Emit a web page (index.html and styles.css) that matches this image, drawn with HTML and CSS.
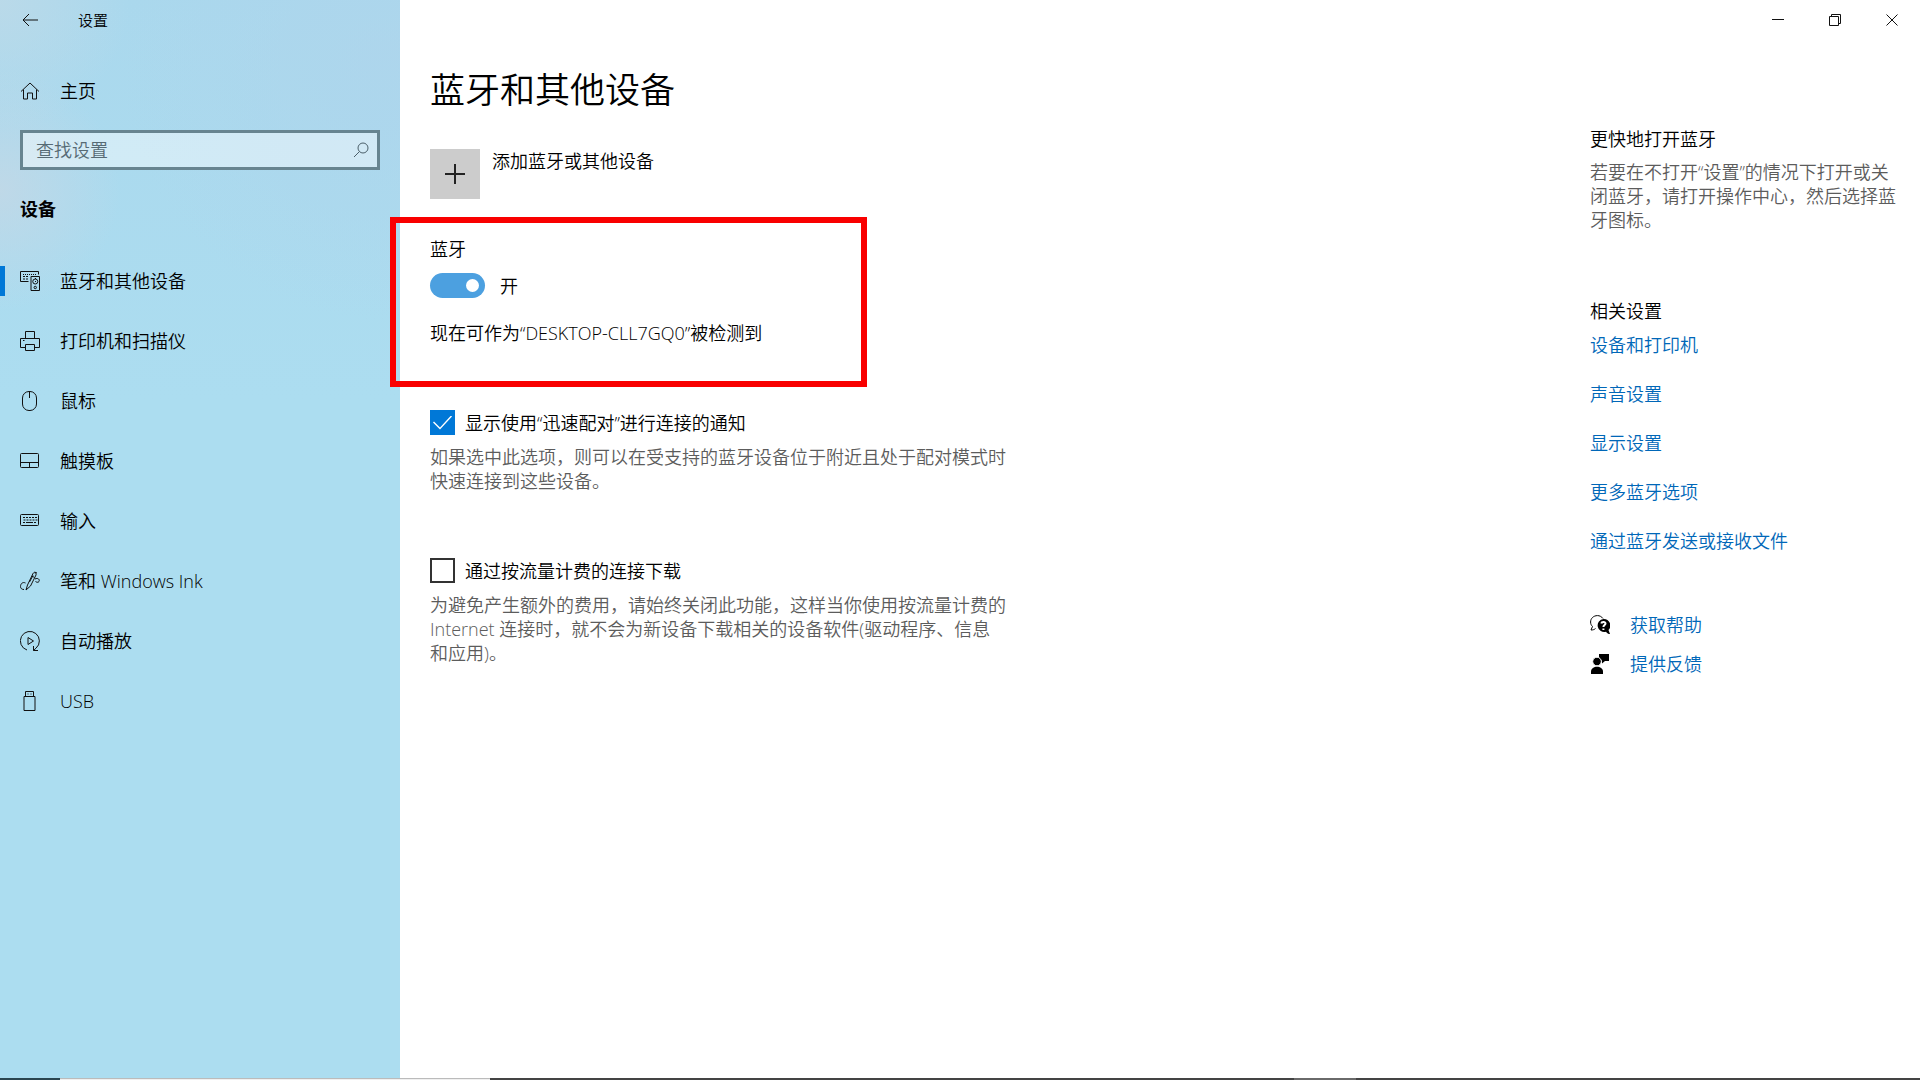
FILE: index.html
```html
<!DOCTYPE html>
<html lang="zh-CN">
<head>
    <meta charset="UTF-8">
    <title>设置</title>
    <link rel="stylesheet" href="styles.css">
</head>
<body>
    <div class="window">
        <!-- Left navigation -->
        <aside class="sidebar">
            <div class="title-bar">
                <button class="back" aria-label="返回">
                    <svg width="16" height="14" viewBox="0 0 16 14"><path d="M1 7h15M7 1L1 7l6 6"/></svg>
                </button>
                <span>设置</span>
            </div>

            <a class="home" href="#">
                <svg width="20" height="20" viewBox="0 0 20 20"><path d="M1 10.5L10 2l9 8.500M3.500 8.500V18h4v-6h5v6h4V8.500"/></svg>
                主页
            </a>

            <div class="search">
                <input type="text" placeholder="查找设置" aria-label="查找设置">
                <svg width="16" height="16" viewBox="0 0 16 16"><circle cx="10" cy="6" r="5"/><path d="M6.500 9.500L1 15"/></svg>
            </div>

            <h2>设备</h2>

            <nav>
                <a class="active" href="#">
                    <svg width="20" height="20" viewBox="0 0 20 20">
                        <path d="M8.500 10.500h-8V.5h18v3M11 5.500h8.500v14H11z"/>
                        <path d="M3 3.500h14" stroke-dasharray="1 1"/>
                        <path d="M3 5.500h5M3 8h2M6 8h2" stroke-dasharray="2 1"/>
                        <circle cx="15.250" cy="10.500" r="2.500"/><circle cx="15.250" cy="16.500" r="1.200"/>
                        <path d="M15 7.500h1M15 10.500h1"/>
                    </svg>
                    蓝牙和其他设备
                </a>
                <a href="#">
                    <svg width="20" height="20" viewBox="0 0 20 20"><path d="M5.500 7.500v-7h9v7M5.500 16.500h-5v-9h19v9h-5M5.500 13.500h9v6h-9zM3 9.500h1.500"/></svg>
                    打印机和扫描仪
                </a>
                <a href="#">
                    <svg width="20" height="20" viewBox="0 0 20 20"><rect x="2.500" y=".5" width="14" height="19" rx="6.500"/><path d="M9.500 1v6"/></svg>
                    鼠标
                </a>
                <a href="#">
                    <svg width="20" height="20" viewBox="0 0 20 20"><rect x=".5" y="2.500" width="18" height="14" rx="1"/><path d="M.5 11.500h18M9.500 11.500v5"/></svg>
                    触摸板
                </a>
                <a href="#">
                    <svg width="20" height="20" viewBox="0 0 20 20"><rect x=".5" y="3.500" width="18" height="11" rx="1"/><path d="M3 6.500h14M3.500 9h14" stroke-dasharray="2 1"/><path d="M3 11.500h2M6 11.500h7M14 11.500h2"/></svg>
                    输入
                </a>
                <a href="#">
                    <svg width="20" height="20" viewBox="0 0 20 20"><path d="M6 19l1.500-5L13 2.500c.8-1.600 3.800-.8 3 1.500L10.500 15 6 19M12 5l2.500 1.500M14.500 1L17 2M5.500 12C2.500 10.500.5 13 .5 15.500c0 2 1.500 3 3.500 3M9.500 11L13 4.500M15 8c3-1.500 5 .5 4 2.500-.8 1.500-3 .5-3.500 0"/></svg>
                    笔和 Windows Ink
                </a>
                <a href="#">
                    <svg width="20" height="20" viewBox="0 0 20 20"><path d="M7 19A9.500 9.500 0 1 1 16 17.200L13.500 19.500M13.500 15v4.500H18M8 6.500v7l5.500-3.500z"/></svg>
                    自动播放
                </a>
                <a href="#">
                    <svg width="20" height="20" viewBox="0 0 20 20"><path d="M5.500 5.500v-5h8v5M4 5.500h11v14H4zM7.500 3h1M10.500 3h1"/></svg>
                    USB
                </a>
            </nav>
        </aside>

        <div class="page">
            <div class="window-buttons">
                <button aria-label="最小化"><svg width="12" height="12" viewBox="0 0 12 12"><path d="M0 5.500h12"/></svg></button>
                <button aria-label="还原"><svg width="12" height="12" viewBox="0 0 12 12"><path d="M.5 2.500h9v9h-9zM2.500 2.500v-2h9v9h-2"/></svg></button>
                <button aria-label="关闭"><svg width="12" height="12" viewBox="0 0 12 12"><path d="M.5.5l11 11M11.500.5l-11 11"/></svg></button>
            </div>

            <div class="columns">
                <main>
                    <h1>蓝牙和其他设备</h1>

                    <button class="add-device">
                        <span class="plus"><svg width="20" height="20" viewBox="0 0 20 20"><path d="M0 10h20M10 0v20"/></svg></span>
                        <span>添加蓝牙或其他设备</span>
                    </button>

                    <section class="bluetooth">
                        <label for="bluetooth">蓝牙</label>
                        <div class="toggle-row">
                            <input type="checkbox" class="toggle" id="bluetooth" checked>
                            <span>开</span>
                        </div>
                        <p>现在可作为“DESKTOP-CLL7GQ0”被检测到</p>
                    </section>

                    <section class="option">
                        <label>
                            <input type="checkbox" class="check" checked>
                            <span>显示使用“迅速配对”进行连接的通知</span>
                        </label>
                        <p>如果选中此选项，则可以在受支持的蓝牙设备位于附近且处于配对模式时快速连接到这些设备。</p>
                    </section>

                    <section class="option">
                        <label>
                            <input type="checkbox" class="check">
                            <span>通过按流量计费的连接下载</span>
                        </label>
                        <p>为避免产生额外的费用，请始终关闭此功能，这样当你使用按流量计费的 Internet 连接时，就不会为新设备下载相关的设备软件(驱动程序、信息和应用)。</p>
                    </section>
                </main>

                <!-- Tips and related links -->
                <aside class="related">
                    <section class="tip">
                        <h3>更快地打开蓝牙</h3>
                        <p>若要在不打开“设置”的情况下打开或关闭蓝牙，请打开操作中心，然后选择蓝牙图标。</p>
                    </section>

                    <section class="links">
                        <h3>相关设置</h3>
                        <a href="#">设备和打印机</a>
                        <a href="#">声音设置</a>
                        <a href="#">显示设置</a>
                        <a href="#">更多蓝牙选项</a>
                        <a href="#">通过蓝牙发送或接收文件</a>
                    </section>

                    <section class="support">
                        <a href="#">
                            <svg width="20" height="20" viewBox="0 0 20 20">
                                <path class="line" d="M13 3.500C11.500 1.500 9.500.6 7.500.6 3.500.6.600 3.400.600 7c0 2 .7 3.300 1.900 4.500L1 15c2 0 3.500-.5 4.500-1.500"/>
                                <path d="M13.500 4a6.500 6.500 0 1 0 2.500 12.700c1 1.500 2.500 2.300 4 2.300l-1.500-4A6.500 6.500 0 0 0 13.500 4z"/>
                                <path class="mark" d="M11.300 8.500c.3-2.200 4.500-2 4.200.2-.2 1.300-2.100 1.500-2.100 3.300M13.400 13.500v1.500"/>
                            </svg>
                            获取帮助
                        </a>
                        <a href="#">
                            <svg width="20" height="20" viewBox="0 0 20 20">
                                <path d="M9 0h10v7h-4l-3 2.500V7L9 3.500z"/>
                                <circle class="head" cx="7" cy="7.500" r="4.300"/>
                                <path d="M1 20v-2.500C1 11 13 11 13 17.500V20z"/>
                            </svg>
                            提供反馈
                        </a>
                    </section>
                </aside>
            </div>
        </div>
    </div>

    <!-- Top edge of the taskbar -->
    <div class="taskbar">
        <span class="start"></span>
        <span class="task-search"></span>
        <span class="apps"></span>
        <span class="running"></span>
        <span class="tray"></span>
    </div>
</body>
</html>
```
FILE: styles.css
```css
* {
    box-sizing: border-box;
}

body {
    margin: 0;
    min-height: 100vh;
    display: flex;
    flex-direction: column;
    background-color: #fff;
    color: #000;
    font-family: "Open Sans", "Noto Sans CJK SC", sans-serif;
    font-size: 18px;
    font-weight: 350;
    line-height: 24px;
}

h1, h2, h3, p {
    margin: 0;
    font-weight: inherit;
}

h3 {
    font-size: 18px;
}

a {
    color: #0067b8;
    text-decoration: none;
}

button {
    padding: 0;
    border: none;
    background: none;
    color: inherit;
    font: inherit;
}

svg {
    display: block;
    flex-shrink: 0;
    fill: none;
    stroke: #111;
}

.window {
    flex: 1;
    display: grid;
    grid-template-columns: 400px 1fr;
}

/* Sidebar */
.sidebar {
    background:
        radial-gradient(circle at 0 190px, rgba(196, 216, 230, 0.8), rgba(196, 216, 230, 0) 120px),
        radial-gradient(circle at 0 0, rgba(190, 218, 232, 0.8), rgba(190, 218, 232, 0) 130px),
        radial-gradient(circle at 380px 60px, rgba(174, 213, 236, 0.8), rgba(174, 213, 236, 0) 260px),
        linear-gradient(#aad8ed, #acddf0 400px);
}

.sidebar a {
    color: #000;
}

.title-bar {
    display: flex;
    align-items: center;
    gap: 40px;
    height: 40px;
    padding-left: 22px;
    font-size: 15px;
}

.home {
    display: flex;
    align-items: center;
    gap: 20px;
    height: 50px;
    margin-top: 26px;
    padding-left: 20px;
}

.search {
    display: flex;
    align-items: center;
    height: 40px;
    margin: 14px 20px 0;
    padding: 0 8px 0 13px;
    border: 3px solid #678490;
    background-color: rgba(255, 255, 255, 0.45);
}

.search input {
    flex: 1;
    min-width: 0;
    padding: 0;
    border: none;
    outline: none;
    background: none;
    font: inherit;
}

.search input::placeholder {
    color: #566a74;
}

.search svg {
    stroke: #4b5f69;
}

.sidebar h2 {
    margin: 27px 0 30px;
    padding-left: 20px;
    font-size: 18px;
    font-weight: 700;
}

nav a {
    display: flex;
    align-items: center;
    gap: 20px;
    height: 60px;
    padding-left: 20px;
}

nav .active {
    padding-left: 0;
}

nav .active::before {
    content: "";
    width: 5px;
    height: 30px;
    margin-right: -5px;
    background-color: #0078d7;
}

/* Content */
.window-buttons {
    display: flex;
    justify-content: flex-end;
    height: 40px;
}

.window-buttons button {
    display: flex;
    align-items: center;
    justify-content: center;
    width: 57px;
}

.columns {
    display: grid;
    grid-template-columns: 1fr 330px;
}

main {
    padding: 24px 30px 0;
}

h1 {
    font-size: 35px;
    line-height: 52px;
}

.add-device {
    display: flex;
    gap: 12px;
    margin-top: 33px;
    text-align: left;
}

.plus {
    display: flex;
    align-items: center;
    justify-content: center;
    width: 50px;
    height: 50px;
    background-color: #ccc;
}

.plus svg {
    stroke: #222;
    stroke-width: 2;
}

/* The frame reaches over the edge of the sidebar */
.bluetooth {
    width: 477px;
    height: 170px;
    margin: 18px 0 0 -40px;
    padding: 14px 34px 0;
    border: 6px solid #f90000;
}

.bluetooth label {
    display: block;
}

.toggle-row {
    display: flex;
    align-items: center;
    gap: 15px;
    margin: 12px 0 23px;
}

.toggle {
    appearance: none;
    display: flex;
    align-items: center;
    justify-content: flex-end;
    width: 55px;
    height: 25px;
    margin: 0;
    padding-right: 6px;
    border-radius: 13px;
    background-color: #4ca0e0;
}

.toggle::before {
    content: "";
    width: 13px;
    height: 13px;
    border-radius: 50%;
    background-color: #fff;
}

.option {
    max-width: 576px;
    margin-top: 65px;
}

.bluetooth + .option {
    margin-top: 23px;
}

.option label {
    display: flex;
    align-items: center;
    gap: 10px;
}

.option p {
    margin-top: 10px;
    color: #5c5c5c;
}

.check {
    appearance: none;
    display: grid;
    place-items: center;
    width: 25px;
    height: 25px;
    margin: 0;
    border: 2px solid #333;
}

.check:checked {
    border-color: #0078d7;
    background-color: #0078d7;
}

.check:checked::before {
    content: "";
    width: 19px;
    height: 14px;
    background-color: #fff;
    clip-path: polygon(0 7px, 1px 6px, 7px 12px, 18px 0, 19px 1px, 7px 14px);
}

/* Right column */
.related {
    padding: 87px 20px 0 0;
}

.tip p {
    margin-top: 9px;
    color: #5c5c5c;
}

.links {
    display: flex;
    flex-direction: column;
    align-items: flex-start;
    gap: 25px;
    margin-top: 67px;
}

.links h3 {
    margin-bottom: -15px;
}

.support {
    display: flex;
    flex-direction: column;
    gap: 15px;
    margin-top: 60px;
}

.support a {
    display: flex;
    align-items: center;
    gap: 20px;
}

.support svg {
    fill: #000;
    stroke: none;
}

.support .line {
    fill: none;
    stroke: #000;
}

.support .mark {
    fill: none;
    stroke: #fff;
    stroke-width: 2;
}

.support .head {
    stroke: #fff;
}

/* Taskbar */
.taskbar {
    display: grid;
    grid-template-columns: 60px 430px 1fr 62px 564px;
    height: 2px;
    background-color: #444;
}

.start {
    background-color: #2b4550;
}

.task-search {
    border-top: 1px solid #bbb;
    background-color: #f0f0f0;
}

.running {
    background-color: #6a6a6a;
}
```
